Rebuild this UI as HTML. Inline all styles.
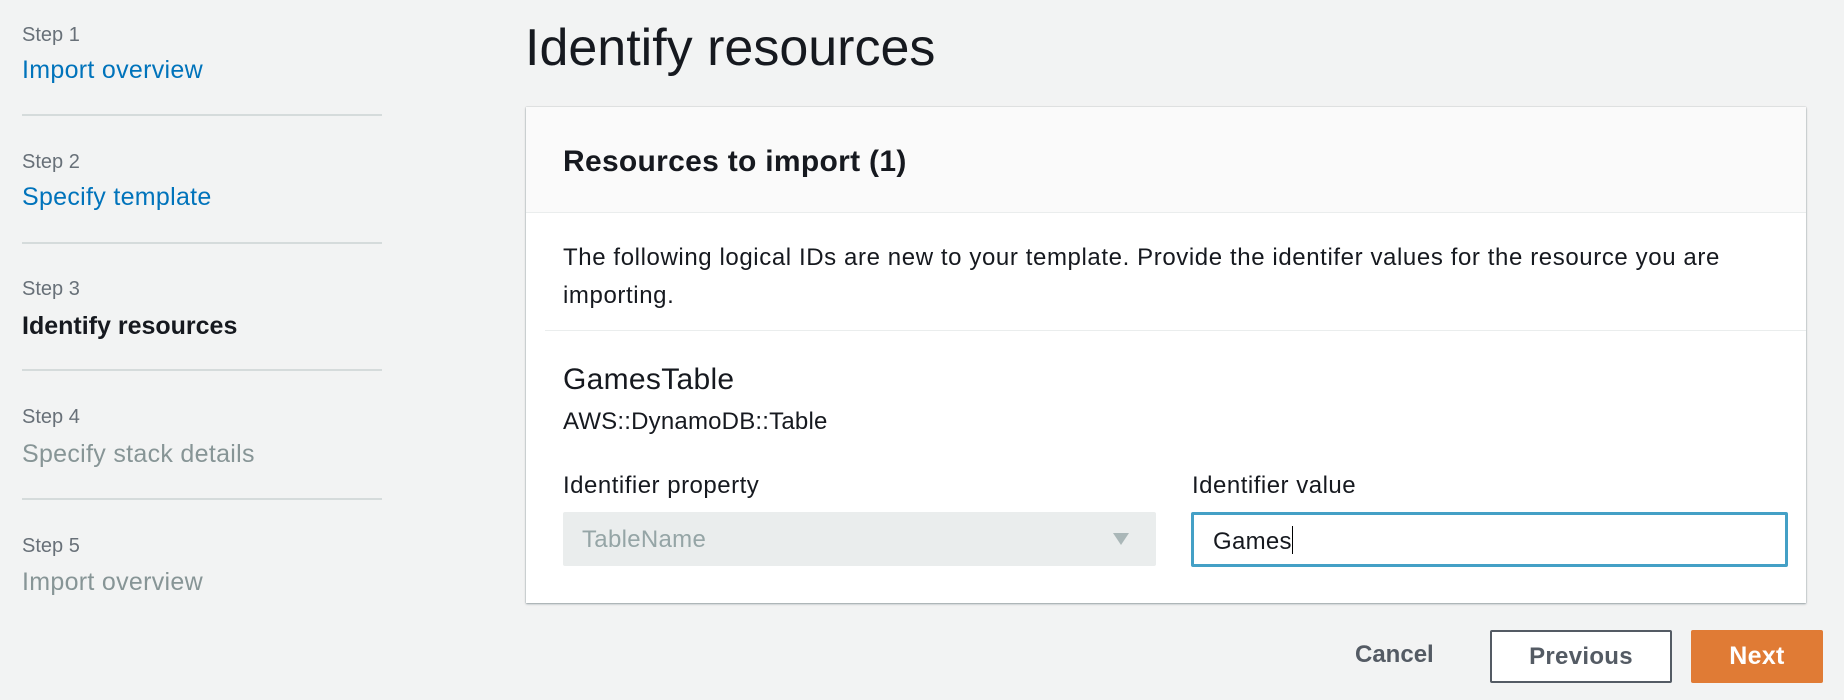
<!DOCTYPE html>
<html><head><meta charset="utf-8"><style>
*{box-sizing:border-box;margin:0;padding:0}
body{width:1844px;height:700px;background:#f2f3f3;font-family:"Liberation Sans",sans-serif;color:#16191f;position:relative;overflow:hidden}
.a{position:absolute;white-space:nowrap}
.sl{font-size:20px;color:#687078}
.st{font-size:25px;color:#0073bb;letter-spacing:0.3px}
.dv{position:absolute;left:22px;width:360px;height:2px;background:#d5dbdb}
</style></head><body>
<div class="a sl" style="left:22px;top:24px">Step 1</div>
<div class="a st" style="left:22px;top:56px">Import overview</div>
<div class="dv" style="top:114px"></div>
<div class="a sl" style="left:22px;top:151px">Step 2</div>
<div class="a st" style="left:22px;top:183px">Specify template</div>
<div class="dv" style="top:242px"></div>
<div class="a sl" style="left:22px;top:278px">Step 3</div>
<div class="a st" style="left:22px;top:312px;color:#16191f;font-weight:bold;letter-spacing:0">Identify resources</div>
<div class="dv" style="top:369px"></div>
<div class="a sl" style="left:22px;top:406px">Step 4</div>
<div class="a st" style="left:22px;top:440px;color:#879596">Specify stack details</div>
<div class="dv" style="top:498px"></div>
<div class="a sl" style="left:22px;top:535px">Step 5</div>
<div class="a st" style="left:22px;top:568px;color:#879596">Import overview</div>

<div class="a" style="left:525px;top:18px;font-size:52px;color:#16191f">Identify resources</div>

<div class="a" style="left:526px;top:107px;width:1280px;height:496px;background:#fff;box-shadow:0 1px 2px rgba(0,28,36,.35),0 0 1px rgba(0,28,36,.3)">
  <div style="height:106px;background:#fafafa;border-bottom:1px solid #eaeded"></div>
  <div class="a" style="left:37px;top:38px;font-size:30px;font-weight:bold;letter-spacing:0.3px">Resources to import (1)</div>
  <div class="a" style="left:37px;top:132px;font-size:24px;letter-spacing:0.6px;line-height:38px;white-space:normal;width:1215px">The following logical IDs are new to your template. Provide the identifer values for the resource you are importing.</div>
  <div class="a" style="left:19px;top:223px;width:1261px;height:1px;background:#eaeded"></div>
  <div class="a" style="left:37px;top:256px;font-size:30px;letter-spacing:0.3px">GamesTable</div>
  <div class="a" style="left:37px;top:301px;font-size:24px;letter-spacing:0.2px">AWS::DynamoDB::Table</div>
  <div class="a" style="left:37px;top:365px;font-size:24px;letter-spacing:0.5px">Identifier property</div>
  <div class="a" style="left:666px;top:365px;font-size:24px;letter-spacing:0.5px">Identifier value</div>
  <div class="a" style="left:37px;top:405px;width:593px;height:54px;background:#eaeded;border-radius:2px">
    <div class="a" style="left:19px;top:14px;font-size:24px;color:#95a5a6;letter-spacing:0.3px">TableName</div>
    <div class="a" style="left:550px;top:21px;width:0;height:0;border-left:8px solid transparent;border-right:8px solid transparent;border-top:12px solid #aab7b8"></div>
  </div>
  <div class="a" style="left:665px;top:405px;width:597px;height:55px;border:3px solid #44a0c6;border-radius:2px">
    <div class="a" style="left:19px;top:11px;font-size:24px;letter-spacing:0.3px">Games<span style="display:inline-block;width:1px;height:28px;background:#000;vertical-align:-5px"></span></div>
  </div>
</div>

<div class="a" style="left:1355px;top:641px;font-size:24px;font-weight:bold;color:#545b64">Cancel</div>
<div class="a" style="left:1490px;top:630px;width:182px;height:53px;border:2px solid #545b64;border-radius:2px;background:#fff;font-size:24px;font-weight:bold;color:#545b64;text-align:center;line-height:49px;letter-spacing:0.3px">Previous</div>
<div class="a" style="left:1691px;top:630px;width:132px;height:53px;background:#e07b35;border-radius:2px;font-size:25px;font-weight:bold;color:#fff;text-align:center;line-height:53px;letter-spacing:0.3px">Next</div>
</body></html>
